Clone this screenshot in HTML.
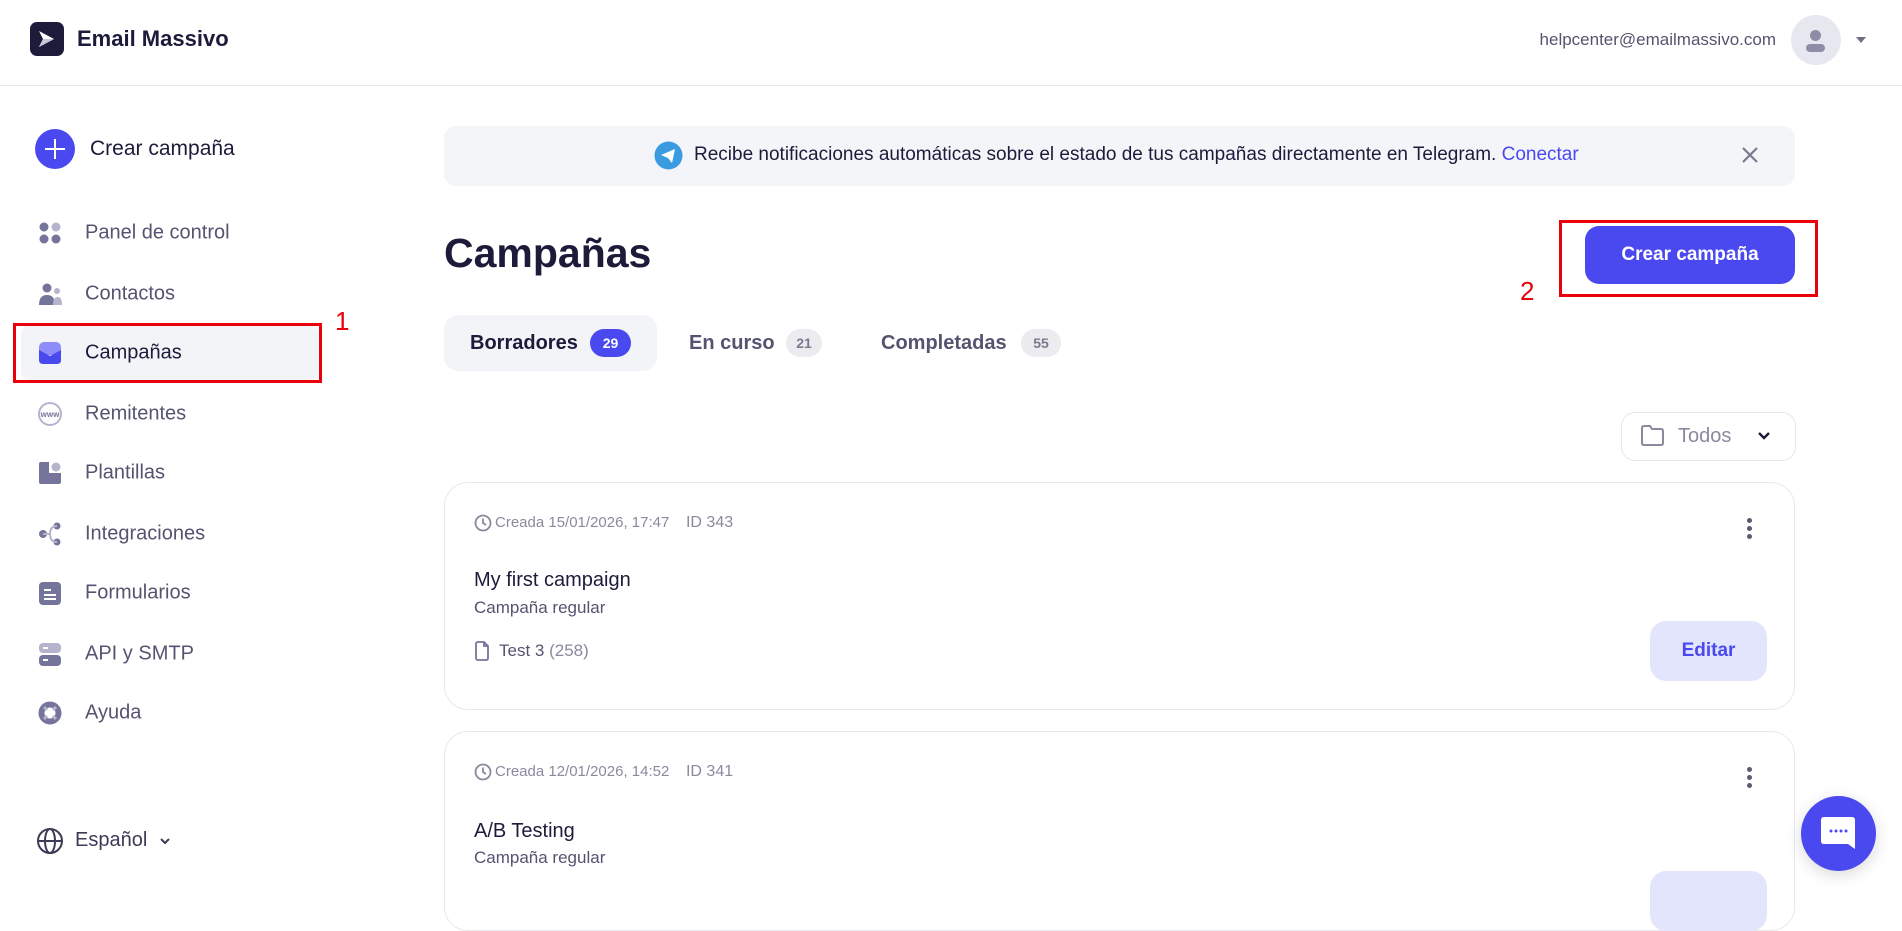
<!DOCTYPE html>
<html><head><meta charset="utf-8"><style>
*{margin:0;padding:0;box-sizing:border-box}
body{width:1902px;height:888px;overflow:hidden;background:#fff;font-family:"Liberation Sans",Arial,sans-serif;color:#1c1b3a;position:relative}
.a{position:absolute}
.nav{position:absolute;left:85px;font-size:20px;color:#555470;transform:translateY(-50%)}
.ic{position:absolute;left:38px;width:24px;height:24px;transform:translateY(-50%)}
.badge{display:inline-block;border-radius:14px;font-size:14px;font-weight:bold;padding:0;text-align:center;line-height:28px;height:28px}
.card{position:absolute;left:444px;width:1351px;border:1px solid #e8e9ee;border-radius:24px;background:#fff}
.meta{position:absolute;left:29px;font-size:15px;color:#8a8a9e}
.dots{position:absolute;right:42px;width:5px}
.dots i{display:block;width:5px;height:5px;border-radius:50%;background:#5b5a72;margin-bottom:3px}
</style></head><body>
<div class="a" style="left:30px;top:22px;width:34px;height:34px;border-radius:7px;background:#1c1b3a"></div>
<svg class="a" style="left:30px;top:22px" width="34" height="34" viewBox="0 0 34 34"><path d="M9 9 L24 17 L9 25 L13 17 Z" fill="#fff"/><path d="M13 17 L24 17 L9 25 Z" fill="#c9c8d8"/></svg>
<div class="a" style="left:77px;top:26px;font-size:22px;font-weight:bold;color:#1c1b3a">Email Massivo</div>
<div class="a" style="left:0;top:85px;width:1902px;height:1px;background:#e6e6ec"></div>
<div class="a" style="right:126px;top:30px;font-size:17px;color:#555470">helpcenter@emailmassivo.com</div>
<div class="a" style="left:1791px;top:15px;width:50px;height:50px;border-radius:50%;background:#e7e7ef"></div>
<div class="a" style="left:1810px;top:30px;width:11px;height:11px;border-radius:50%;background:#8e8da8"></div>
<div class="a" style="left:1806px;top:44px;width:19px;height:8px;border-radius:5px;background:#8e8da8"></div>
<div class="a" style="left:1856px;top:37px;width:0;height:0;border-left:5px solid transparent;border-right:5px solid transparent;border-top:6px solid #6f6e88"></div>

<div class="a" style="left:35px;top:129px;width:40px;height:40px;border-radius:50%;background:#4a49f0"></div>
<div class="a" style="left:45px;top:148px;width:20px;height:2px;background:#fff"></div>
<div class="a" style="left:54px;top:139px;width:2px;height:20px;background:#fff"></div>
<div class="a" style="left:90px;top:137px;font-size:21px;color:#1c1b3a">Crear campaña</div>

<div class="a" style="left:21px;top:325px;width:297px;height:55px;border-radius:8px;background:#f3f4f8"></div>
<div class="a" style="left:13px;top:323px;width:309px;height:60px;border:3px solid #e8000b"></div>
<div class="a" style="left:335px;top:306px;font-size:26px;color:#e8000b">1</div>

<svg class="ic" style="top:233px" viewBox="0 0 24 24"><circle cx="6" cy="6" r="4.5" fill="#75749a"/><circle cx="18" cy="6" r="4.5" fill="#b5b4cd"/><circle cx="6" cy="18" r="4.5" fill="#75749a"/><circle cx="18" cy="18" r="4.5" fill="#75749a"/></svg>
<div class="nav" style="top:233px">Panel de control</div>
<svg class="ic" style="top:294px" viewBox="0 0 24 24"><circle cx="9" cy="6" r="4.5" fill="#75749a"/><path d="M1 23 Q1 13 9 13 Q17 13 17 23Z" fill="#75749a"/><circle cx="19" cy="9" r="3" fill="#b5b4cd"/><path d="M15 23 Q15 15 20 15 Q24 15 24 23Z" fill="#b5b4cd"/></svg>
<div class="nav" style="top:294px">Contactos</div>
<svg class="ic" style="top:353px" viewBox="0 0 24 24"><rect x="1" y="1" width="22" height="13" rx="5" fill="#8e8cf8"/><path d="M1 9 L12 15 L23 9 V19 Q23 23 19 23 H5 Q1 23 1 19Z" fill="#4a49f0"/></svg>
<div class="nav" style="top:353px;color:#1c1b3a">Campañas</div>
<svg class="ic" style="top:414px" viewBox="0 0 24 24"><circle cx="12" cy="12" r="11" fill="none" stroke="#b5b4cd" stroke-width="2"/><text x="12" y="15" font-size="8" font-weight="bold" text-anchor="middle" fill="#75749a" font-family="Liberation Sans">www</text></svg>
<div class="nav" style="top:414px">Remitentes</div>
<svg class="ic" style="top:473px" viewBox="0 0 24 24"><path d="M1 3 Q1 1 3 1 H11 V12 H23 V21 Q23 23 21 23 H3 Q1 23 1 21Z" fill="#75749a"/><circle cx="18" cy="6" r="4.5" fill="#b5b4cd"/></svg>
<div class="nav" style="top:473px">Plantillas</div>
<svg class="ic" style="top:534px" viewBox="0 0 24 24"><circle cx="5" cy="12" r="4" fill="#75749a"/><circle cx="19" cy="4" r="3.5" fill="#75749a"/><circle cx="19" cy="20" r="3.5" fill="#75749a"/><path d="M19 4 Q12 4 12 12 Q12 20 19 20 M5 12 H12" stroke="#b5b4cd" stroke-width="2" fill="none"/></svg>
<div class="nav" style="top:534px">Integraciones</div>
<svg class="ic" style="top:593px" viewBox="0 0 24 24"><rect x="1" y="1" width="22" height="23" rx="4" fill="#75749a"/><rect x="6" y="8" width="7" height="2" fill="#fff"/><rect x="6" y="13" width="12" height="2" fill="#fff"/><rect x="6" y="17" width="12" height="2" fill="#fff"/></svg>
<div class="nav" style="top:593px">Formularios</div>
<svg class="ic" style="top:654px" viewBox="0 0 24 24"><rect x="1" y="1" width="22" height="10" rx="4" fill="#b5b4cd"/><rect x="1" y="13" width="22" height="11" rx="4" fill="#75749a"/><rect x="5" y="5" width="5" height="2" fill="#fff"/><rect x="5" y="17" width="5" height="2" fill="#fff"/></svg>
<div class="nav" style="top:654px">API y SMTP</div>
<svg class="ic" style="top:713px" viewBox="0 0 24 24"><circle cx="12" cy="12" r="8.5" fill="none" stroke="#75749a" stroke-width="6"/><path d="M6 6 L9 9 M18 6 L15 9 M6 18 L9 15 M18 18 L15 15" stroke="#b5b4cd" stroke-width="3"/></svg>
<div class="nav" style="top:713px">Ayuda</div>

<svg class="a" style="left:36px;top:827px" width="28" height="28" viewBox="0 0 28 28" fill="none" stroke="#3c3b55" stroke-width="2"><circle cx="14" cy="14" r="12"/><ellipse cx="14" cy="14" rx="5" ry="12"/><path d="M2 14 H26"/></svg>
<div class="a" style="left:75px;top:829px;font-size:20px;color:#3c3b55">Español</div>
<svg class="a" style="left:159px;top:836px" width="12" height="10" viewBox="0 0 12 10"><path d="M2 3 L6 7 L10 3" stroke="#3c3b55" stroke-width="2" fill="none"/></svg>

<div class="a" style="left:444px;top:126px;width:1351px;height:60px;border-radius:12px;background:#f4f5f9"></div>
<svg class="a" style="left:654px;top:141px" width="29" height="29" viewBox="0 0 29 29"><circle cx="14.5" cy="14.5" r="14" fill="#3a9be0"/><path d="M7 14 L21 8 L18 22 L14 17 Z" fill="#fff"/></svg>
<div class="a" style="left:694px;top:144px;font-size:19px;color:#1c1b3a">Recibe notificaciones automáticas sobre el estado de tus campañas directamente en Telegram. <span style="color:#4a49f0">Conectar</span></div>
<svg class="a" style="left:1740px;top:145px" width="20" height="20" viewBox="0 0 20 20"><path d="M3 3 L17 17 M17 3 L3 17" stroke="#7a7990" stroke-width="2.2"/></svg>

<div class="a" style="left:444px;top:230px;font-size:41px;font-weight:bold;color:#1c1b3a">Campañas</div>

<div class="a" style="left:1559px;top:220px;width:259px;height:77px;border:3px solid #e8000b"></div>
<div class="a" style="left:1585px;top:226px;width:210px;height:58px;border-radius:14px;background:#4a49f0;color:#fff;font-weight:bold;font-size:19px;line-height:58px;text-align:center">Crear campaña</div>
<div class="a" style="left:1520px;top:276px;font-size:26px;color:#e8000b">2</div>

<div class="a" style="left:444px;top:315px;width:213px;height:56px;border-radius:14px;background:#f3f4f8"></div>
<div class="a" style="left:470px;top:332px;font-size:20px;font-weight:bold;color:#1c1b3a">Borradores</div>
<div class="a badge" style="left:590px;top:329px;width:41px;background:#4a49f0;color:#fff">29</div>
<div class="a" style="left:689px;top:332px;font-size:20px;font-weight:bold;color:#555470">En curso</div>
<div class="a badge" style="left:786px;top:329px;width:36px;background:#ebebf0;color:#7a7990">21</div>
<div class="a" style="left:881px;top:332px;font-size:20px;font-weight:bold;color:#555470">Completadas</div>
<div class="a badge" style="left:1021px;top:329px;width:40px;background:#ebebf0;color:#7a7990">55</div>

<div class="a" style="left:1621px;top:412px;width:175px;height:49px;border:1px solid #e6e6ec;border-radius:14px"></div>
<svg class="a" style="left:1640px;top:424px" width="25" height="23" viewBox="0 0 25 23"><path d="M2 4 Q2 2 4 2 H10 L12 5 H21 Q23 5 23 7 V19 Q23 21 21 21 H4 Q2 21 2 19Z" fill="none" stroke="#8a8a9e" stroke-width="2"/></svg>
<div class="a" style="left:1678px;top:425px;font-size:20px;color:#8a8a9e">Todos</div>
<svg class="a" style="left:1757px;top:430px" width="14" height="12" viewBox="0 0 14 12"><path d="M2 3 L7 8 L12 3" stroke="#1c1b3a" stroke-width="2.4" fill="none"/></svg>

<div class="card" style="top:482px;height:228px">
  <svg class="a" style="left:29px;top:31px" width="18" height="18" viewBox="0 0 18 18"><circle cx="9" cy="9" r="7.5" fill="none" stroke="#8a8a9e" stroke-width="1.8"/><path d="M9 4.5 V9 L12 11" stroke="#8a8a9e" stroke-width="1.8" fill="none"/></svg>
  <div class="meta" style="left:50px;top:31px">Creada 15/01/2026, 17:47 &nbsp;&nbsp; <span style="font-size:16px">ID 343</span></div>
  <div class="dots" style="top:35px"><i></i><i></i><i></i></div>
  <div class="a" style="left:29px;top:86px;font-size:20px;color:#1c1b3a">My first campaign</div>
  <div class="a" style="left:29px;top:115px;font-size:17px;color:#555470">Campaña regular</div>
  <svg class="a" style="left:29px;top:158px" width="16" height="20" viewBox="0 0 16 20"><path d="M2 3 Q2 1 4 1 H10 L14 5 V17 Q14 19 12 19 H4 Q2 19 2 17Z M10 1 V5 H14" fill="none" stroke="#75749a" stroke-width="1.8"/></svg>
  <div class="a" style="left:54px;top:158px;font-size:17px;color:#555470">Test 3 <span style="color:#8a8a9e">(258)</span></div>
  <div class="a" style="left:1205px;top:138px;width:117px;height:60px;border-radius:16px;background:#e3e5fc;color:#4a49f0;font-weight:bold;font-size:19px;line-height:60px;text-align:center">Editar</div>
</div>
<div class="card" style="top:731px;height:200px">
  <svg class="a" style="left:29px;top:31px" width="18" height="18" viewBox="0 0 18 18"><circle cx="9" cy="9" r="7.5" fill="none" stroke="#8a8a9e" stroke-width="1.8"/><path d="M9 4.5 V9 L12 11" stroke="#8a8a9e" stroke-width="1.8" fill="none"/></svg>
  <div class="meta" style="left:50px;top:31px">Creada 12/01/2026, 14:52 &nbsp;&nbsp; <span style="font-size:16px">ID 341</span></div>
  <div class="dots" style="top:35px"><i></i><i></i><i></i></div>
  <div class="a" style="left:29px;top:88px;font-size:20px;color:#1c1b3a">A/B Testing</div>
  <div class="a" style="left:29px;top:116px;font-size:17px;color:#555470">Campaña regular</div>
  <div class="a" style="left:1205px;top:139px;width:117px;height:60px;border-radius:16px;background:#e3e5fc"></div>
</div>

<div class="a" style="left:1801px;top:796px;width:75px;height:75px;border-radius:50%;background:#4a49f0;box-shadow:0 4px 16px rgba(0,0,0,.15)"></div>
<svg class="a" style="left:1820px;top:815px" width="37" height="37" viewBox="0 0 37 37"><path d="M4 2 H32 Q35 2 35 5 V34 L28 29 H4 Q1 29 1 26 V5 Q1 2 4 2Z" fill="#fff"/><circle cx="11" cy="16" r="1.5" fill="#4a49f0"/><circle cx="16" cy="16" r="1.5" fill="#4a49f0"/><circle cx="21" cy="16" r="1.5" fill="#4a49f0"/><circle cx="26" cy="16" r="1.5" fill="#4a49f0"/></svg>
</body></html>
